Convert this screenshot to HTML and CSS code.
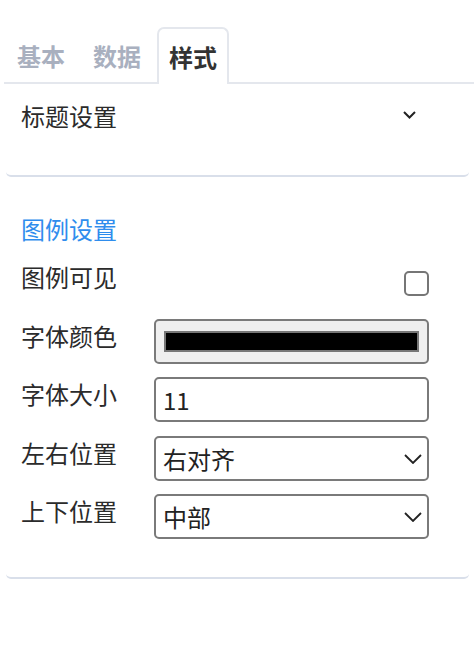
FILE: index.html
```html
<!DOCTYPE html>
<html>
<head>
<meta http-equiv="Content-Type" content="text/html; charset=UTF-8">
<title>样式设置</title>
<link rel="stylesheet" href="styles.css">
</head>
<body>
<div class="tabs">
  <div class="tab">基本</div>
  <div class="tab">数据</div>
  <div class="tab active">样式</div>
</div>

<div class="card card-title">
  <div class="collapse-head">
    <span>标题设置</span>
    <svg class="chevron" width="13" height="8" viewBox="0 0 13 8">
      <path d="M1 1 L6.5 6.5 L12 1" fill="none" stroke="#222" stroke-width="2"/>
    </svg>
  </div>
</div>

<div class="card card-legend">
  <div class="section-title">图例设置</div>

  <div class="form-row">
    <label class="form-label">图例可见</label>
    <div class="form-field field-right">
      <span class="checkbox"></span>
    </div>
  </div>

  <div class="form-row">
    <label class="form-label">字体颜色</label>
    <div class="form-field">
      <div class="color-box"><div class="swatch"></div></div>
    </div>
  </div>

  <div class="form-row">
    <label class="form-label">字体大小</label>
    <div class="form-field">
      <input class="text-input" type="text" value="11">
    </div>
  </div>

  <div class="form-row">
    <label class="form-label">左右位置</label>
    <div class="form-field select-wrap">
      <select class="select-input">
        <option>右对齐</option>
        <option>左对齐</option>
        <option>居中</option>
      </select>
      <svg class="select-arrow" width="18" height="10" viewBox="0 0 18 10">
        <path d="M1 1 L9 9 L17 1" fill="none" stroke="#222" stroke-width="1.8"/>
      </svg>
    </div>
  </div>

  <div class="form-row">
    <label class="form-label">上下位置</label>
    <div class="form-field select-wrap">
      <select class="select-input">
        <option>中部</option>
        <option>顶部</option>
        <option>底部</option>
      </select>
      <svg class="select-arrow" width="18" height="10" viewBox="0 0 18 10">
        <path d="M1 1 L9 9 L17 1" fill="none" stroke="#222" stroke-width="1.8"/>
      </svg>
    </div>
  </div>
</div>
</body>
</html>
```

FILE: styles.css
```css
body {
  margin: 0;
  font-family: "Noto Sans CJK SC", "Noto Sans", sans-serif;
  font-size: 24px;
  color: #2b2b2b;
  background-color: #fff;
}
.tabs {
  display: flex;
  gap: 4px;
  margin-left: 4px;
  padding-top: 27px;
  padding-left: 1px;
  border-bottom: 2px solid #e4e7ed;
}
.tab {
  height: 54px;
  line-height: 56px;
  padding: 0 11px;
  border: 1px solid transparent;
  border-bottom: none;
  font-weight: bold;
  color: #a9b0bf;
  margin-bottom: -2px;
}
.tab.active {
  color: #333;
  background-color: #fff;
  border: 2px solid #e4e7ed;
  border-bottom: none;
  border-radius: 7px 7px 0 0;
  height: 55px;
  padding: 0 10px;
}
.card {
  margin: 0 5px 0 6px;
  padding: 0 40px 0 15px;
  border-bottom: 2px solid #d9dfea;
  border-radius: 0 0 5px 5px;
}
.card-title {
  padding-top: 9px;
  padding-bottom: 38px;
}
.collapse-head {
  display: flex;
  justify-content: space-between;
  align-items: center;
  height: 44px;
}
.chevron {
  margin-right: 13px;
}
.card-legend {
  margin-top: 1px;
  padding-top: 26px;
  padding-bottom: 38px;
}
.section-title {
  color: #2f8ded;
  line-height: 50px;
  margin-bottom: 6px;
}
.form-row {
  display: flex;
  align-items: flex-start;
  height: 45px;
  margin-bottom: 13.5px;
}
.form-row:last-child {
  margin-bottom: 0;
}
.form-label {
  width: 133px;
  flex-shrink: 0;
  line-height: 33px;
}
.form-field {
  flex: 1;
  height: 45px;
}
.field-right {
  display: flex;
  justify-content: flex-end;
  align-items: center;
}
.checkbox {
  width: 21px;
  height: 21px;
  border: 2px solid #767676;
  border-radius: 5px;
  margin-top: 2px;
}
.color-box {
  box-sizing: border-box;
  height: 45px;
  padding: 10px 8px;
  background-color: #efefef;
  border: 2px solid #7a7a7a;
  border-radius: 5px;
}
.swatch {
  height: 17px;
  background-color: #000;
  border: 2px solid #777;
}
.text-input,
.select-input {
  box-sizing: border-box;
  width: 100%;
  height: 45px;
  padding: 0 7px;
  font-family: "Noto Sans CJK SC", "Noto Sans", sans-serif;
  font-size: 24px;
  color: #222;
  background-color: #fff;
  border: 2px solid #7a7a7a;
  border-radius: 5px;
  outline: none;
}
.select-wrap {
  position: relative;
}
.select-input {
  appearance: none;
  -webkit-appearance: none;
}
.select-arrow {
  position: absolute;
  right: 7px;
  top: 18px;
  pointer-events: none;
}
```
